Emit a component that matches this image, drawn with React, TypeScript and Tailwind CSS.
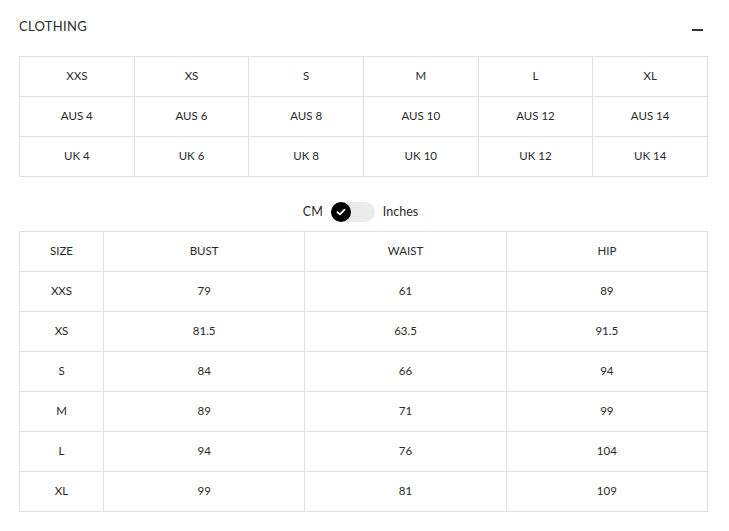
import React from "react";

const sizes = ["XXS", "XS", "S", "M", "L", "XL"];
const aus = ["AUS 4", "AUS 6", "AUS 8", "AUS 10", "AUS 12", "AUS 14"];
const uk = ["UK 4", "UK 6", "UK 8", "UK 10", "UK 12", "UK 14"];

const measurements = [
  ["XXS", "79", "61", "89"],
  ["XS", "81.5", "63.5", "91.5"],
  ["S", "84", "66", "94"],
  ["M", "89", "71", "99"],
  ["L", "94", "76", "104"],
  ["XL", "99", "81", "109"],
];

const cell = "border border-[#e0e0e0] h-[40px] text-center align-middle p-0 pb-[1px]";

export default function App() {
  return (
    <div
      className="w-[729px] h-[531px] bg-white text-[#2a2a2a] overflow-hidden"
      style={{ fontFamily: "Lato, 'Open Sans', sans-serif" }}
    >
      {/* Header */}
      <div className="flex items-start justify-between h-[56px] pl-[19px] pr-[26px] pt-[18px]">
        <h2 className="text-[13px] leading-[16px] tracking-[0.3px]">CLOTHING</h2>
        <div className="mt-[11px] w-[11px] h-[1.5px] bg-[#333]" />
      </div>

      {/* Size conversion */}
      <div className="px-[19px]">
        <table className="w-[689px] border-collapse table-fixed text-[11.5px]">
          <tbody>
            {[sizes, aus, uk].map((row, i) => (
              <tr key={i}>
                {row.map((v) => (
                  <td key={v} className={cell}>
                    {v}
                  </td>
                ))}
              </tr>
            ))}
          </tbody>
        </table>
      </div>

      {/* Unit toggle */}
      <div className="flex items-center justify-center gap-[8px] mt-[25px] mb-[9px] h-[20px] text-[12.5px] pr-[8px]">
        <span>CM</span>
        <div className="relative w-[44px] h-[20px]">
          <div className="absolute left-[3px] right-0 top-0 h-[20px] rounded-full bg-[#ebebeb]" />
          <div className="absolute left-0 top-0 w-[20px] h-[20px] rounded-full bg-black flex items-center justify-center">
            <svg width="10" height="8" viewBox="0 0 10 8">
              <path d="M1.5 4.2 L4 6.4 L8.5 1.6" fill="none" stroke="white" strokeWidth="1.8" strokeLinecap="round" strokeLinejoin="round" />
            </svg>
          </div>
        </div>
        <span>Inches</span>
      </div>

      {/* Measurements */}
      <div className="px-[19px]">
        <table className="w-[689px] border-collapse table-fixed text-[11.5px]">
          <colgroup>
            <col className="w-[84px]" />
            <col />
            <col />
            <col />
          </colgroup>
          <tbody>
            <tr>
              {["SIZE", "BUST", "WAIST", "HIP"].map((h) => (
                <td key={h} className={cell}>
                  {h}
                </td>
              ))}
            </tr>
            {measurements.map((row) => (
              <tr key={row[0]}>
                {row.map((v, j) => (
                  <td key={j} className={cell}>
                    {v}
                  </td>
                ))}
              </tr>
            ))}
          </tbody>
        </table>
      </div>
    </div>
  );
}
